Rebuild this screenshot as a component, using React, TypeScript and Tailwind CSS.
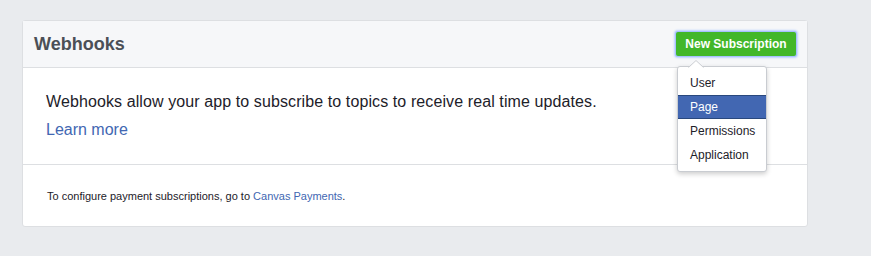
export default function App() {
  const items = ["User", "Page", "Permissions", "Application"];
  return (
    <div
      className="min-h-[256px] w-[871px] bg-[#e9ebee] pl-[22px] pt-[20px]"
      style={{ fontFamily: '"Liberation Sans", Helvetica, Arial, sans-serif' }}
    >
      <div className="w-[786px] rounded-[3px] border border-[#dddfe2] bg-white">
        {/* Header */}
        <div className="flex h-[47px] items-center justify-between border-b border-[#dddfe2] bg-[#f6f7f9] pl-[11px] pr-[11px]">
          <h2 className="text-[18px] font-bold leading-6 text-[#4b4f56]">Webhooks</h2>
          <div className="relative">
            <button className="flex h-[24px] w-[120px] items-center justify-center rounded-[2px] bg-[#42b72a] text-[12px] font-bold text-white shadow-[0_0_0_1px_#a6c1ff,0_0_2px_2px_#bcd0ff]">
              New Subscription
            </button>
            {/* Dropdown */}
            <div className="absolute left-[1px] top-[34px] z-10 w-[90px] rounded-[3px] border border-[#c9ccd1] bg-white pb-[4px] pt-[4px] shadow-[0_2px_5px_rgba(0,0,0,0.2)]">
              <svg
                className="absolute -top-[7px] left-[10px]"
                width="16"
                height="8"
                viewBox="0 0 16 8"
              >
                <path d="M0 8 L8 0 L16 8 Z" fill="#ffffff" />
                <path d="M0.5 7.5 L8 0.5 L15.5 7.5" fill="none" stroke="#c9ccd1" strokeWidth="1" />
              </svg>
              {items.map((item) => (
                <div
                  key={item}
                  className={
                    item === "Page"
                      ? "h-[24px] border-y border-[#29487d] bg-[#4267b2] pl-[12px] text-[12px] leading-[22px] text-white"
                      : "h-[24px] pl-[12px] text-[12px] leading-[24px] text-[#1d2129]"
                  }
                >
                  {item}
                </div>
              ))}
            </div>
          </div>
        </div>

        {/* Body */}
        <div className="border-b border-[#dddfe2] px-[23px] pb-[24px] pt-[24px]">
          <p className="text-[16px] leading-5 tracking-[0.1px] text-[#1d2129]">
            Webhooks allow your app to subscribe to topics to receive real time updates.
          </p>
          <a className="mt-[8px] block text-[16px] leading-5 text-[#4267b2]">Learn more</a>
        </div>

        {/* Footer */}
        <div className="px-[24px] pb-[23px] pt-[24px]">
          <p className="text-[11px] leading-[14px] text-[#1d2129]">
            To configure payment subscriptions, go to{" "}
            <a className="text-[#4267b2]">Canvas Payments</a>.
          </p>
        </div>
      </div>
    </div>
  );
}
